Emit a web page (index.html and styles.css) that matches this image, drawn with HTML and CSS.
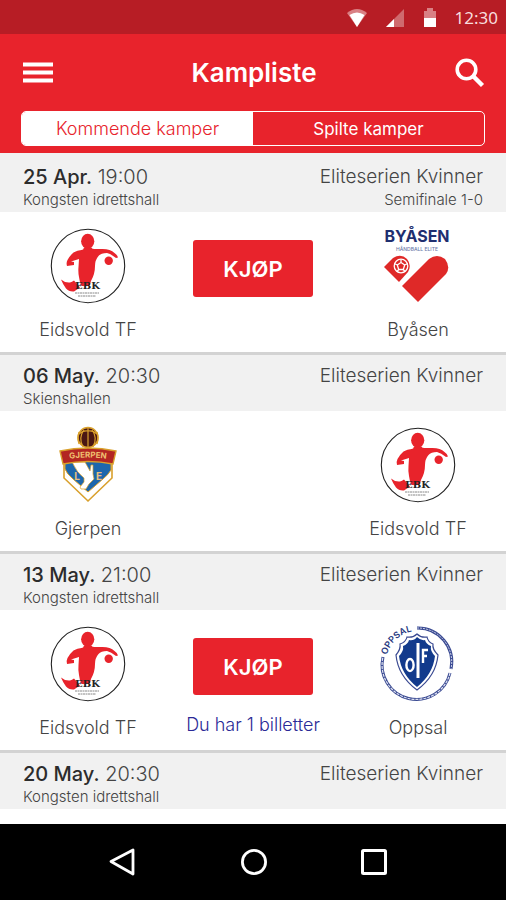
FILE: index.html
```html
<!DOCTYPE html>
<html lang="no">
<head>
<meta charset="utf-8">
<meta name="viewport" content="width=device-width, initial-scale=1">
<title>Kampliste</title>
<link rel="stylesheet" href="styles.css">
</head>
<body>
<div class="app">
  <div class="status">
    <svg width="20" height="20" viewBox="0 0 20 20" aria-hidden="true"><path d="M0 5q10-8 20 0L10 19z" fill="#d98084"/><path d="M2.500 7q7.500-5 15 0L10 19z" fill="#fff"/></svg>
    <svg width="20" height="20" viewBox="0 0 20 20" aria-hidden="true"><path d="M19 1v18H1z" fill="#cf6a6e"/><path d="M9 11v8H1z" fill="#fff"/></svg>
    <svg width="14" height="20" viewBox="0 0 14 20" aria-hidden="true"><path d="M1 3h3V0h6v3h3v8H1z" fill="#d98084"/><path d="M1 10h12v9H1z" fill="#fff"/></svg>
    <span class="clock">12:30</span>
  </div>
  <header class="header">
    <div class="bar">
      <button class="icon-btn" aria-label="Meny"><svg width="30" height="22" viewBox="0 0 30 22"><path d="M0 2.500h30M0 10.500h30M0 18.500h30" stroke="#fff" stroke-width="4"/></svg></button>
      <h1 class="title">Kampliste</h1>
      <button class="icon-btn" aria-label="Søk"><svg width="30" height="30" viewBox="0 0 30 30" fill="none" stroke="#fff"><circle cx="11.500" cy="11.500" r="9.300" stroke-width="3.600"/><path d="M18 18l9.500 9.500" stroke-width="4.400"/></svg></button>
    </div>
    <div class="tabs">
      <button class="tab tab-active">Kommende kamper</button>
      <button class="tab">Spilte kamper</button>
    </div>
  </header>
  <main class="list">
    <section class="match match-first">
      <div class="head">
        <div><p class="when"><b>25 Apr.</b> 19:00</p><p class="place">Kongsten idrettshall</p></div>
        <div class="series"><p class="league">Eliteserien Kvinner</p><p class="place">Semifinale 1-0</p></div>
      </div>
      <div class="body">
        <div class="team">
          <svg class="logo" viewBox="0 0 76 76" aria-hidden="true">
            <g id="ebk">
              <circle cx="38" cy="38" r="36.700" fill="#fff" stroke="#222" stroke-width="1.100"/>
              <g fill="#e8232b">
                <ellipse cx="37.700" cy="13.300" rx="6.600" ry="7.500"/>
                <path d="M34 19.500h7.500q.5 1.500 3 1.500h8q8 0 12 4 3 2 3.500 4.500l-2 .5q-5-4-9-5-6 0-8.500 3-3.500 4-3.500 10 0 8-4 15l-1.500 5h-8q-2-4-2.500-9-1-5-.5-10l.5-8-8 2.500 3 .5v3l-7 1q-1-3 .5-6 2-4 6-7.500 4-2.500 8-2.500 2 0 2.500-2.500z"/>
                <circle cx="58.700" cy="32.700" r="4.200"/>
                <path d="M11 51.500q4 3.500 9 3 2-.5 4-2l6 7-6 4q-5 .5-8-3-3-4-5-9z"/>
              </g>
              <text x="37.500" y="61" class="ebk-text">EBK</text>
              <path d="M25 65h24M28 68h18" stroke="#888" stroke-width="1" stroke-dasharray="2 .5"/>
            </g>
          </svg>
          <p class="name">Eidsvold TF</p>
        </div>
        <div class="action"><button class="buy">KJØP</button></div>
        <div class="team">
          <svg class="logo" viewBox="0 0 76 76" aria-hidden="true">
            <text x="37" y="14" class="by-name">BYÅSEN</text>
            <text x="37" y="23" class="by-sub">HÅNDBALL ELITE</text>
            <g fill="#df2928">
              <path d="M4 39l9-9q8-5 14 1 5 6 1 13l-9 10z"/>
              <path d="M22 58l27-27q8-6 16 0 6 8 1 15L38 74z"/>
            </g>
            <g fill="none" stroke="#fff" stroke-width="1.300"><circle cx="21" cy="38" r="6.800"/><path d="M21 34.500l3.700 2.500-1.400 4.500h-4.600L17.300 37zM21 34.500v-3M24.700 37l3-1.500M23.300 41.500l2 2.500M18.700 41.500l-2 2.500M17.300 37l-3-1.500"/></g>
          </svg>
          <p class="name">Byåsen</p>
        </div>
      </div>
    </section>
    <section class="match">
      <div class="head">
        <div><p class="when"><b>06 May.</b> 20:30</p><p class="place">Skienshallen</p></div>
        <div class="series"><p class="league">Eliteserien Kvinner</p></div>
      </div>
      <div class="body">
        <div class="team">
          <svg class="logo" viewBox="0 0 76 76" aria-hidden="true">
            <circle cx="38" cy="10.500" r="10" fill="#4a1713" stroke="#d9a02c" stroke-width="1.400"/>
            <path d="M38 1v20M34 3q-6 8-1 17M42 3q6 8 1 17M29 7q4-4 9-3 5-1 9 3M29 5q-2 7 0 12M47 5q2 7 0 12" fill="none" stroke="#d9a02c" stroke-width="1.200"/>
            <path d="M14 33h48v18L38 74 14 51z" fill="#fff" stroke="#d9a02c" stroke-width="1.600"/>
            <path d="M15 34h46v9q-3 5-8 9L38 65 23 52q-6-5-8-10z" fill="#1d67ac" stroke="#d9a02c" stroke-width="1"/>
            <path d="M22 35h13l5 9 1-6 2 0 0 9 1 5-5 5-3 5-5 0-1-2 4-5v-4q-7-5-12-16z" fill="#fff" stroke="#d9a02c" stroke-width=".7"/>
            <path d="M10 24q28-6 56 0l-3 13q-25-5-50 0z" fill="#b32623" stroke="#d9a02c" stroke-width="1.400"/>
            <path id="gj-arc" d="M13 33q25-5 50 0" fill="none"/>
            <text class="gj-name"><textPath href="#gj-arc" startOffset="50%">GJERPEN</textPath></text>
            <text x="27" y="53" class="gj-letter">L</text><text x="49" y="53" class="gj-letter">E</text>
          </svg>
          <p class="name">Gjerpen</p>
        </div>
        <div class="action"></div>
        <div class="team"><svg class="logo" viewBox="0 0 76 76" aria-hidden="true"><use href="#ebk"/></svg><p class="name">Eidsvold TF</p></div>
      </div>
    </section>
    <section class="match">
      <div class="head">
        <div><p class="when"><b>13 May.</b> 21:00</p><p class="place">Kongsten idrettshall</p></div>
        <div class="series"><p class="league">Eliteserien Kvinner</p></div>
      </div>
      <div class="body">
        <div class="team"><svg class="logo" viewBox="0 0 76 76" aria-hidden="true"><use href="#ebk"/></svg><p class="name">Eidsvold TF</p></div>
        <div class="action"><button class="buy">KJØP</button><p class="tickets">Du har 1 billetter</p></div>
        <div class="team">
          <svg class="logo" viewBox="0 0 76 76" aria-hidden="true">
            <g fill="none" stroke="#3a4a92">
              <path d="M37 2A34 34 0 0 1 71 43" stroke-width="3"/>
              <path d="M37 2A34 34 0 0 1 71 43" stroke="#cdd3ea" stroke-width="1" stroke-dasharray="2 1"/>
              <path d="M70 47A34 34 0 0 1 3 31" stroke-width="3"/>
              <path d="M70 47A34 34 0 0 1 3 31" stroke="#dfe3f2" stroke-width="1.200" stroke-dasharray="3 1"/>
              <path d="M37 8q4 4 10 3 1 5 6 7-1 5 5 11-2 21-21 35Q18 50 16 29q5-6 4-11 6-2 7-7 6 1 10-3z" fill="#fff" stroke-width="1.200"/>
            </g>
            <path d="M37 11q4 4 8 3 1 4 6 6-1 5 4 10-2 18-18 31Q21 48 19 30q5-5 4-10 5-2 6-6 5 1 8-3z" fill="#123a8c"/>
            <path id="op-arc" d="M7 29A31 31 0 0 1 44 6" fill="none"/>
            <text class="op-name"><textPath href="#op-arc">OPPSAL</textPath></text>
            <path d="M38 17v35" stroke="#fff" stroke-width="3"/>
            <ellipse cx="30" cy="39" rx="3.600" ry="6" fill="none" stroke="#fff" stroke-width="2.400"/>
            <path d="M43 37V24h5M43 30h4" fill="none" stroke="#fff" stroke-width="2.400"/>
          </svg>
          <p class="name">Oppsal</p>
        </div>
      </div>
    </section>
    <section class="match">
      <div class="head">
        <div><p class="when"><b>20 May.</b> 20:30</p><p class="place">Kongsten idrettshall</p></div>
        <div class="series"><p class="league">Eliteserien Kvinner</p></div>
      </div>
    </section>
  </main>
  <nav class="nav">
    <button class="icon-btn" aria-label="Tilbake"><svg width="28" height="30" viewBox="0 0 28 30"><path d="M25 3v24L3 14.500z" fill="none" stroke="#fff" stroke-width="2.800" stroke-linejoin="round"/></svg></button>
    <button class="icon-btn" aria-label="Hjem"><svg width="28" height="28" viewBox="0 0 28 28"><circle cx="14" cy="14" r="11.600" fill="none" stroke="#fff" stroke-width="2.800"/></svg></button>
    <button class="icon-btn" aria-label="Oversikt"><svg width="28" height="28" viewBox="0 0 28 28"><rect x="2.500" y="2.500" width="23" height="23" rx="1" fill="none" stroke="#fff" stroke-width="3"/></svg></button>
  </nav>
</div>
</body>
</html>
```
FILE: styles.css
```css
* { box-sizing: border-box; }
body, p, h1 { margin: 0; }
body { font-family: Inter, "Liberation Sans", sans-serif; color: #444; background: #fff; }
button { font: inherit; border: 0; padding: 0; background: none; cursor: pointer; }
svg { display: block; }

.app { display: flex; flex-direction: column; height: 100vh; overflow: hidden; }

.status { display: flex; flex: none; align-items: center; justify-content: flex-end; gap: 18px; height: 34px; padding: 2px 8px 0 0; background: #b71d25; }
.clock { color: #f8dcdd; font-family: "Noto Sans", sans-serif; font-size: 17px; line-height: 24px; }

.header { flex: none; padding: 0 21px 7px; background: #e8232c; }
.bar { display: flex; align-items: center; justify-content: space-between; height: 77px; padding: 0 0 0 2px; }
.title { color: #fff; font-size: 26px; font-weight: 600; line-height: 32px; }
.tabs { display: grid; grid-template-columns: 1fr 1fr; height: 35px; border: 1px solid #fff; border-radius: 5px; overflow: hidden; }
.tab { color: #fff; font-size: 17px; font-weight: 400; }
.tab-active { color: #e8232c; background: #fff; font-size: 18px; font-weight: 300; }

.list { flex: 1; min-height: 0; overflow: hidden; }
.match { border-top: 3px solid #d3d3d3; }
.match-first { border-top-color: #f1f1f1; }
.head { display: flex; justify-content: space-between; height: 56px; padding: 8px 23px 0; background: #f1f1f1; }
.series { text-align: right; }
.when { font-size: 20px; font-weight: 300; line-height: 26px; }
.when b { color: #2c2c2c; font-weight: 500; }
.league { font-size: 19px; font-weight: 300; line-height: 26px; }
.place { font-size: 15px; font-weight: 300; line-height: 20px; }

.body { display: grid; grid-template-columns: 128px 1fr 128px; height: 140px; padding: 16px 24px 0; }
.team { display: flex; flex-direction: column; align-items: center; gap: 14px; }
.logo { width: 76px; height: 76px; overflow: visible; }
.name { font-size: 18px; font-weight: 300; line-height: 24px; }
.action { display: flex; flex-direction: column; align-items: center; gap: 18px; padding-top: 12px; }
.buy { width: 120px; height: 57px; border-radius: 3px; color: #fff; background: #e8232c; font-size: 22px; font-weight: 600; }
.tickets { color: #2a2a96; font-size: 18px; font-weight: 300; line-height: 24px; white-space: nowrap; }

.ebk-text { fill: #222; font: bold 10px "DejaVu Serif", serif; text-anchor: middle; }
.by-name { fill: #1f2f70; font: 700 16px Inter, sans-serif; text-anchor: middle; }
.by-sub { fill: #6b78a8; font: 500 5px Inter, sans-serif; text-anchor: middle; }
.gj-name { fill: #f0c070; font: 700 8px Inter, sans-serif; text-anchor: middle; }
.gj-letter { fill: #e8c080; font: 700 10px Inter, sans-serif; text-anchor: middle; }
.op-name { fill: #26387f; font: 600 9px Inter, sans-serif; }

.nav { display: grid; flex: none; grid-template-columns: 11fr 11fr 9fr; place-items: center; height: 76px; padding: 0 78px 0 56px; background: #000; }
```
